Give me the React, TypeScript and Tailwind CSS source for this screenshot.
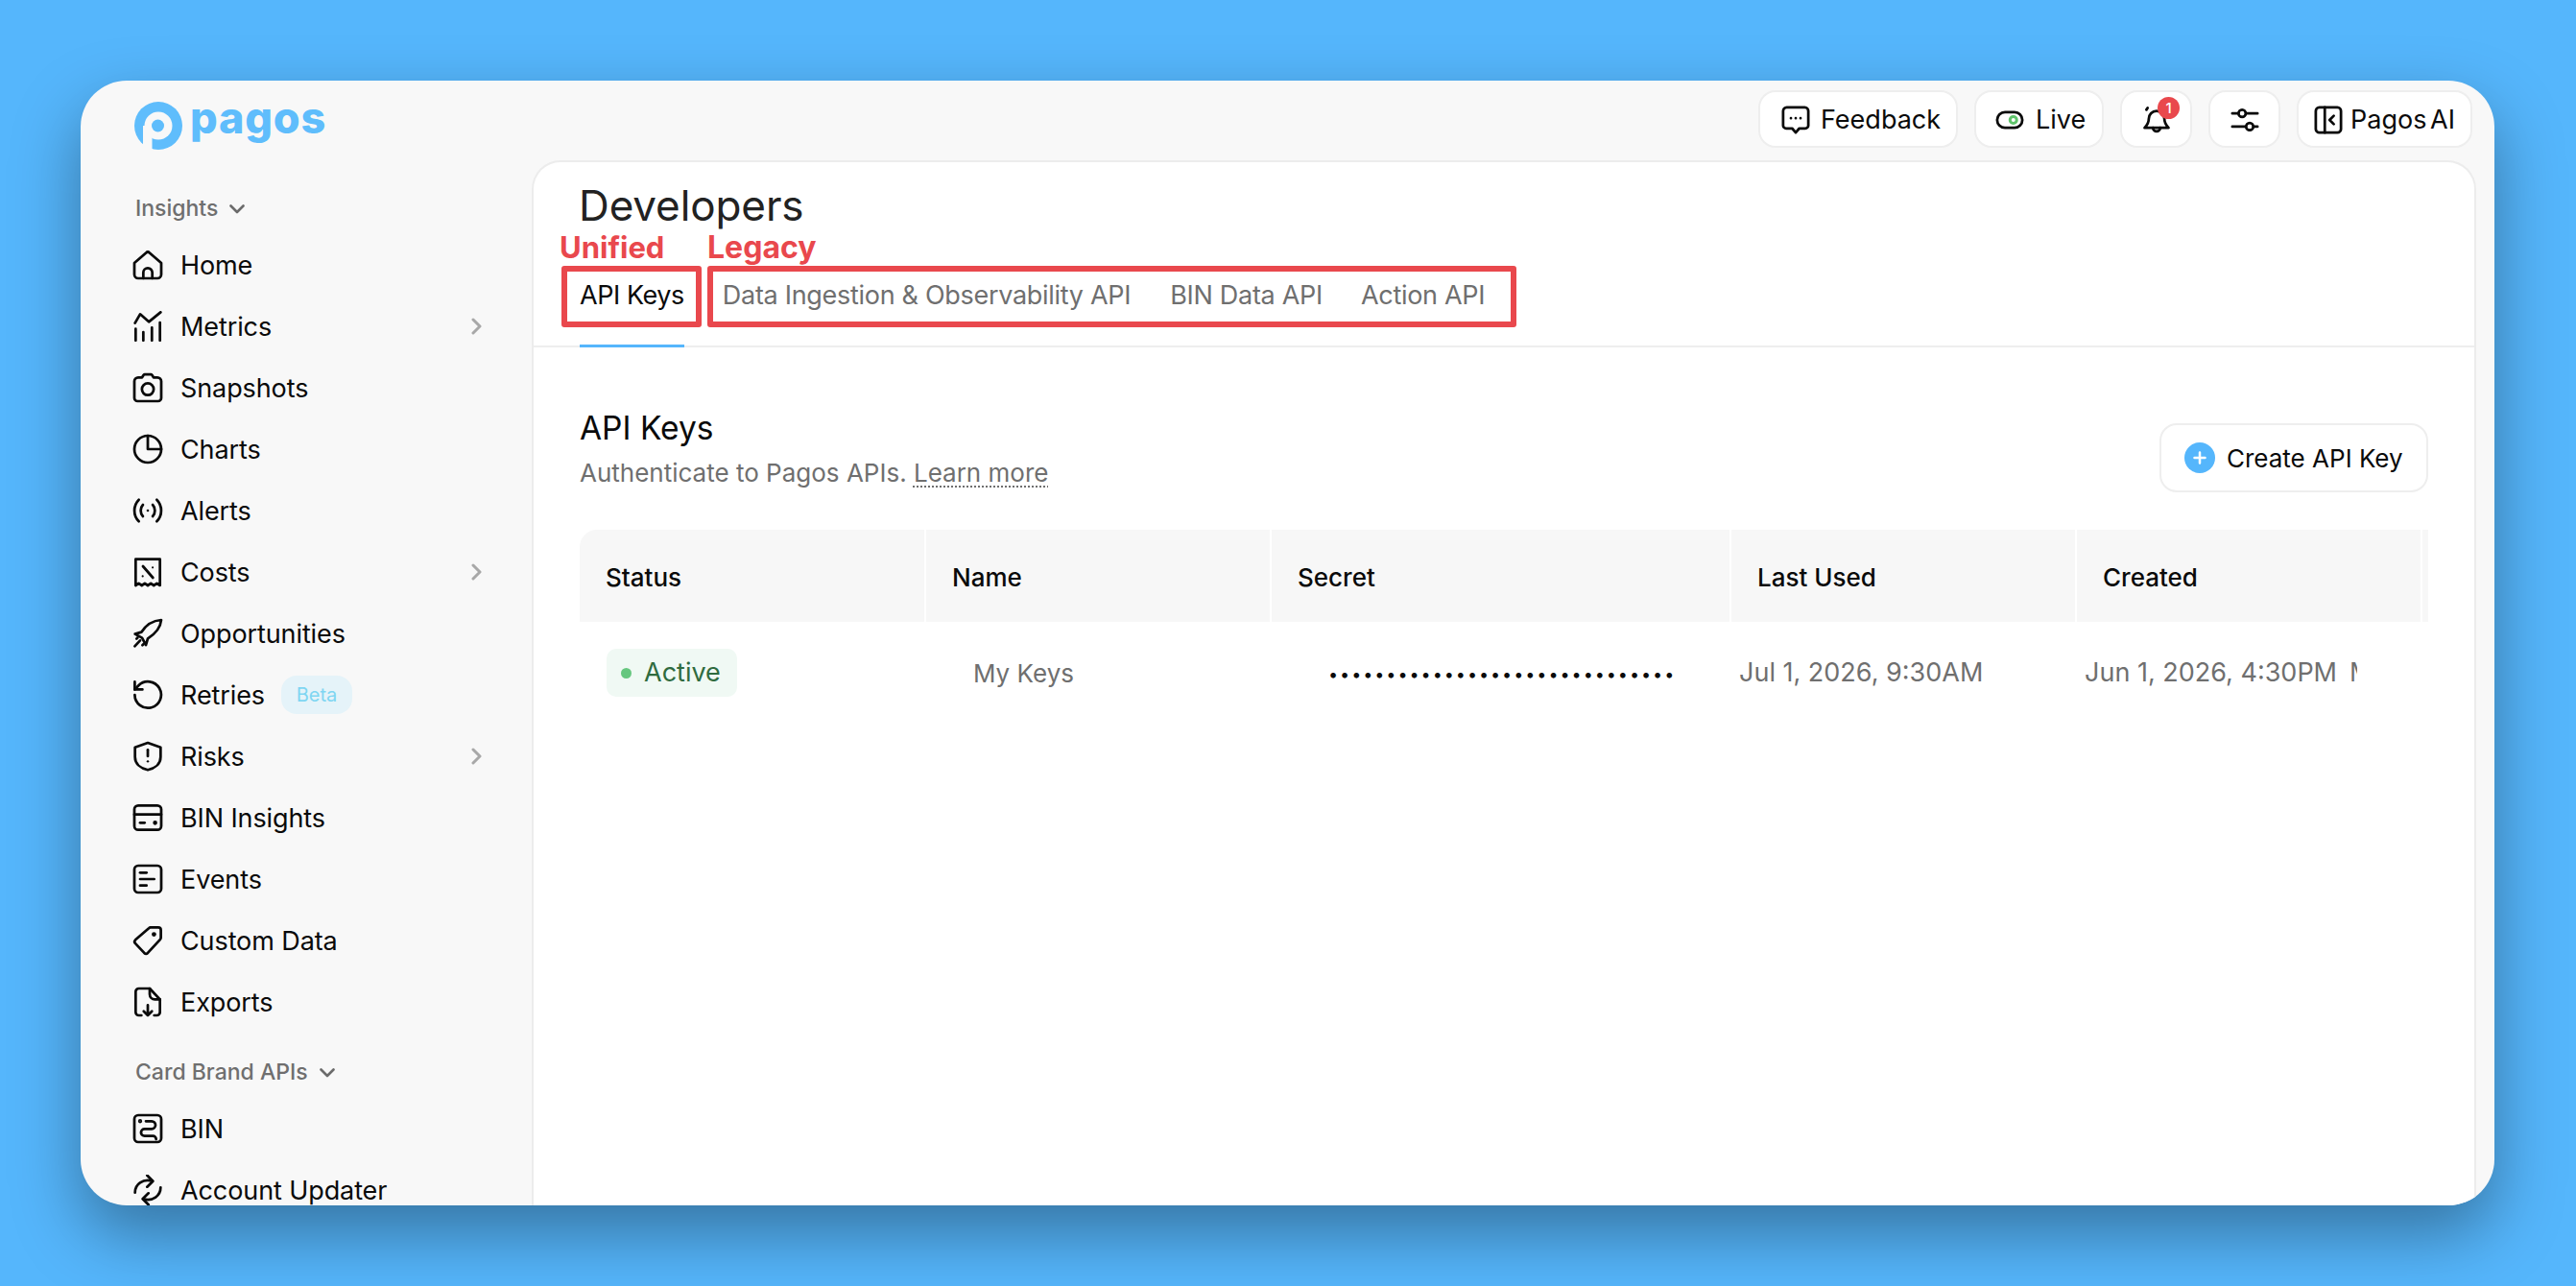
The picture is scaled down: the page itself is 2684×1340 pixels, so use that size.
import React from "react";

const S = ({ size = 32, children, sw = 2.05 }: { size?: number; children: React.ReactNode; sw?: number }) => (
  <svg width={size} height={size} viewBox="0 0 24 24" fill="none" stroke="currentColor" strokeWidth={sw} strokeLinecap="round" strokeLinejoin="round" className="shrink-0">
    {children}
  </svg>
);

const icons: Record<string, React.ReactNode> = {
  home: <><path d="M1.5 10.5 10.6 2.6a2 2 0 0 1 2.8 0l9.1 7.9V19.5a3 3 0 0 1-3 3h-15a3 3 0 0 1-3-3z" /><path d="M8.5 22.5V18a3.5 3.5 0 0 1 7 0v4.5" /></>,
  metrics: <><path d="M2.5 23v-9M8.5 23v-6.5M15.2 23v-10M21.5 23V9" /><path d="M2 9.5 6 2.5l6.8 6L22 1" /></>,
  camera: <><path d="M7.5 4 8.6 2.2A1 1 0 0 1 9.5 1.6h5a1 1 0 0 1 .9.6L16.5 4h3a3 3 0 0 1 3 3v13a2.5 2.5 0 0 1-2.5 2.5H4A2.5 2.5 0 0 1 1.5 20V7a3 3 0 0 1 3-3z" /><circle cx="12" cy="13.2" r="4.6" /></>,
  chart: <><circle cx="12" cy="12" r="10.5" /><path d="M12 1.5V12h10.5" /></>,
  alert: <><path d="M5 20.5c-4.6-4.6-4.6-12.4 0-17" /><path d="M8.2 16.5c-2.3-2.4-2.3-6.6 0-9" /><circle cx="12" cy="12" r="1" fill="currentColor" stroke="none" /><path d="M15.8 7.5c2.3 2.4 2.3 6.6 0 9" /><path d="M19 3.5c4.6 4.6 4.6 12.4 0 17" /></>,
  cost: <><path d="M2.5 2h19v20.5l-2.4-1.6-2.4 1.6-2.35-1.6-2.35 1.6-2.35-1.6-2.35 1.6-2.4-1.6-2.4 1.6z" /><path d="M8.2 7.5l7.8 9" /><circle cx="15.8" cy="8.5" r=".8" fill="currentColor" stroke="none" /><circle cx="8" cy="15.3" r=".8" fill="currentColor" stroke="none" /></>,
  rocket: <><path d="M22.5 1.5C15.5 2 10.5 5.5 7 11l-5 1.5 5.5 3 3 5.5 1.5-5c5.5-3.5 10-9 10.5-14.5z" /><path d="M6 17.5 1.8 22M3.2 16.2l.8-.8M7.8 21.2l.8-.8" /></>,
  retry: <><path d="M1.8 12a10.3 10.3 0 1 0 3-7.3L1.8 7.8" /><path d="M1.8 1.8v6h6" /></>,
  risk: <><path d="M12 1.5 22 5v7.5c0 5.5-4.5 9-10 10.2C6.5 21.5 2 18 2 12.5V5z" /><path d="M12 7v5" /><circle cx="12" cy="16" r=".9" fill="currentColor" stroke="none" /></>,
  card: <><rect x="1.5" y="2.5" width="21" height="19" rx="3" /><path d="M1.5 9.5h21" /><path d="M6 16h3.5" /><circle cx="17.7" cy="16" r=".7" fill="currentColor" /></>,
  events: <><rect x="1.5" y="1.5" width="21" height="21" rx="3" /><path d="M6 7h5" /><path d="M6 12h11" /><path d="M6 17h5" /></>,
  tag: <><path d="M14 1.8h6.2a2 2 0 0 1 2 2V10a1.5 1.5 0 0 1-.5 1.1L12 21.7a2 2 0 0 1-2.8 0L2.3 14.3a2 2 0 0 1 0-2.8L13 2.2a1.5 1.5 0 0 1 1-.4z" /><circle cx="16.8" cy="7.2" r="1.8" fill="currentColor" stroke="none" /></>,
  export: <><path d="M7 22.5H5A2.5 2.5 0 0 1 2.5 20V4A2.5 2.5 0 0 1 5 1.5h8.5l8 8.5v10a2.5 2.5 0 0 1-2.5 2.5h-2" /><path d="M13.5 1.5V6a4 4 0 0 0 4 4h4" /><path d="M12 14.5v8M8.8 19.3 12 22.5l3.2-3.2" /></>,
  bin: <><rect x="1.5" y="1.5" width="21" height="21" rx="3" /><path d="M10.5 6.2H15a3 3 0 0 1 0 6H9.5a2.8 2.8 0 0 0 0 5.6H16a2.5 2.5 0 0 1 2.5 2.5" /><circle cx="6" cy="6.2" r=".6" fill="currentColor" /></>,
  updater: <><path d="M2 14C2 7.5 8 3 15.5 5" /><path d="M11.5.5 16 5l-4.5 4.5" /><path d="M22 10c0 6.5-6 11-13.5 9" /><path d="M12.5 14.5 8 19l4.5 4.5" /></>,
};

const Chevron = () => (
  <svg width="12" height="18" viewBox="0 0 12 18" fill="none" stroke="#a8a8a8" strokeWidth="3" strokeLinecap="round" strokeLinejoin="round" className="shrink-0">
    <path d="M2 2l7 7-7 7" />
  </svg>
);

const ChevDown = () => (
  <svg width="16" height="10" viewBox="0 0 16 10" fill="none" stroke="#6b6b6b" strokeWidth="2.6" strokeLinecap="round" strokeLinejoin="round" className="shrink-0">
    <path d="M1.5 1.5 8 8l6.5-6.5" />
  </svg>
);

const NavRow = ({ icon, label, chevron, badge }: { icon: string; label: string; chevron?: boolean; badge?: boolean }) => (
  <div className="flex h-16 items-center text-[#0a0a0a]">
    <S>{icons[icon]}</S>
    <span className="ml-[18px] whitespace-nowrap text-[27px] leading-none tracking-[-0.1px]">{label}</span>
    {badge && (
      <span className="ml-[17px] flex h-10 w-[74px] items-center justify-center rounded-[16px] bg-[#e5f3f9] text-[20px] text-[#7fd6f2]">Beta</span>
    )}
    {chevron && (
      <span className="ml-auto mr-[51px] flex">
        <Chevron />
      </span>
    )}
  </div>
);

const SectionLabel = ({ label, className }: { label: string; className: string }) => (
  <div className={`flex items-center gap-[12px] pl-[3px] text-[23px] font-medium leading-none text-[#6f6f6f] ${className}`}>
    <span>{label}</span>
    <ChevDown />
  </div>
);

const TopButton = ({ children, className }: { children: React.ReactNode; className: string }) => (
  <div className={`relative flex h-[60px] items-center rounded-[18px] border-2 border-[#eeeeee] bg-white pt-[2px] text-[27px] text-[#0a0a0a] ${className}`}>
    {children}
  </div>
);

const th = "flex items-center bg-[#f7f7f7] pl-[27px] pt-[2px] text-[26px] font-medium text-[#0a0a0a]";

export default function App() {
  return (
    <div className="h-[1340px] w-[2684px] overflow-hidden bg-[#55b6fc] pb-[84px] pl-[84px] pr-[85px] pt-[84px] font-[family-name:Inter,sans-serif]">
      <div className="flex h-full overflow-hidden rounded-[48px] bg-[#f8f8f8] shadow-[0_30px_70px_rgba(0,0,0,0.36)]">
        <aside className="w-[470px] shrink-0 overflow-hidden pl-[54px]">
          <div className="flex items-start pt-[22px]">
            <svg width="50" height="50" viewBox="0 0 50 50" className="ml-[2px] shrink-0">
              <circle cx="25" cy="25" r="25" fill="#5fbdfc" />
              <circle cx="25" cy="25" r="14.5" fill="#f8f8f8" />
              <rect x="9" y="25" width="9.5" height="25" fill="#f8f8f8" />
              <circle cx="24.5" cy="25" r="6.5" fill="#5fbdfc" />
            </svg>
            <span className="ml-[8px] mt-[-13px] text-[45px] font-extrabold leading-[60px] tracking-[0.8px] text-[#5fbdfc]">pagos</span>
          </div>
          <SectionLabel label="Insights" className="mt-[50px] mb-[15px]" />
          <NavRow icon="home" label="Home" />
          <NavRow icon="metrics" label="Metrics" chevron />
          <NavRow icon="camera" label="Snapshots" />
          <NavRow icon="chart" label="Charts" />
          <NavRow icon="alert" label="Alerts" />
          <NavRow icon="cost" label="Costs" chevron />
          <NavRow icon="rocket" label="Opportunities" />
          <NavRow icon="retry" label="Retries" badge />
          <NavRow icon="risk" label="Risks" chevron />
          <NavRow icon="card" label="BIN Insights" />
          <NavRow icon="events" label="Events" />
          <NavRow icon="tag" label="Custom Data" />
          <NavRow icon="export" label="Exports" />
          <SectionLabel label="Card Brand APIs" className="mt-[30px] mb-[15px]" />
          <NavRow icon="bin" label="BIN" />
          <NavRow icon="updater" label="Account Updater" />
        </aside>

        <div className="flex min-w-0 flex-1 flex-col">
          <div className="flex h-[83px] shrink-0 items-start justify-end gap-[17px] pr-[23px] pt-[10px]">
            <TopButton className="w-[208px] pl-[22px]">
              <S size={30} sw={2.2}>
                <path d="M4.5 1.5h15a3 3 0 0 1 3 3v12a2.5 2.5 0 0 1-2.5 2.5h-5l-3 3.5L9 19H4a2.5 2.5 0 0 1-2.5-2.5v-12a3 3 0 0 1 3-3z" />
                <path d="M8 10.5h.01M12 10.5h.01M16 10.5h.01" />
              </S>
              <span className="ml-[11px]">Feedback</span>
            </TopButton>
            <TopButton className="w-[135px] pl-[20px]">
              <S size={30} sw={2.2}>
                <rect x="1.5" y="5.5" width="21" height="13" rx="6.5" />
                <circle cx="15" cy="12" r="2.8" stroke="#5fc46b" strokeWidth="2.4" />
              </S>
              <span className="ml-[12px]">Live</span>
            </TopButton>
            <TopButton className="w-[75px] justify-center">
              <S size={30} sw={2.2}>
                <path d="M12 4.5a6.5 6.5 0 0 1 6.5 6.5c0 4 1.5 5.5 3.5 7.5H2c2-2 3.5-3.5 3.5-7.5A6.5 6.5 0 0 1 12 4.5z" />
                <path d="M9 18.5a3 3 0 0 0 6 0" />
                <path d="M4.5 2 3.5 3.5" />
              </S>
              <span className="absolute left-[37px] top-[5px] flex h-[23px] w-[23px] items-center justify-center rounded-full bg-[#e9484d] text-[15px] font-medium leading-none text-white">1</span>
            </TopButton>
            <TopButton className="w-[75px] justify-center">
              <S size={30} sw={2.2}>
                <path d="M1.5 6.5h5M13 6.5h9.5" />
                <circle cx="9.7" cy="6.5" r="3" />
                <path d="M1.5 17.5h11M19.2 17.5h3.3" />
                <circle cx="16" cy="17.5" r="3" />
              </S>
            </TopButton>
            <TopButton className="w-[183px] pl-[16px]">
              <S size={30} sw={2.2}>
                <rect x="1.5" y="1.5" width="21" height="21" rx="3" />
                <path d="M9 1.5v21" />
                <path d="M16.5 8.5 13 12l3.5 3.5" />
              </S>
              <span className="ml-[8px] [word-spacing:-4px]">Pagos AI</span>
            </TopButton>
          </div>

          <main className="relative mr-[19px] min-h-0 flex-1 rounded-t-[30px] border-x-2 border-t-2 border-[#ececec] bg-white">
            <div className="border-b-2 border-[#eeeeee]">
              <h1 className="pl-[47px] pt-[15px] text-[44px] font-normal leading-[60px] tracking-[-0.1px] text-[#222222]">Developers</h1>
              <div className="mt-[50px] flex gap-[41px] pl-[48px] text-[27px] leading-none tracking-[-0.3px] text-[#6f6f6f]">
                <div className="relative pb-[39px] tracking-[-0.45px] text-[#0a0a0a]">
                  API Keys
                  <div className="absolute -bottom-[2px] left-0 right-0 h-[3px] bg-[#55b6fc]" />
                </div>
                <div className="-ml-[1px]">Data Ingestion &amp; Observability API</div>
                <div>BIN Data API</div>
                <div className="-ml-[1px]">Action API</div>
              </div>
            </div>

            <div className="pl-[48px] pr-[48px]">
              <div className="mt-[62px] flex items-end justify-between">
                <div className="pb-[2px]">
                  <div className="mb-[1px] text-[33.5px] font-normal leading-[44px] text-[#0a0a0a]">API Keys</div>
                  <div className="mt-[7px] text-[26px] leading-[36px] text-[#6f6f6f]">
                    Authenticate to Pagos APIs.{" "}
                    <span className="underline decoration-dotted decoration-2 underline-offset-4">Learn more</span>
                  </div>
                </div>
                <div className="flex h-[72px] w-[280px] items-center rounded-[18px] border-2 border-[#eeeeee] bg-white pl-[24px] text-[26px] text-[#0a0a0a]">
                  <svg width="32" height="32" viewBox="0 0 32 32" className="shrink-0">
                    <circle cx="16" cy="16" r="16" fill="#55b6fc" />
                    <path d="M16 10.5v11M10.5 16h11" stroke="white" strokeWidth="2.5" strokeLinecap="round" />
                  </svg>
                  <span className="ml-[12px] whitespace-nowrap">Create API Key</span>
                </div>
              </div>

              <div className="mt-[39px] flex h-[96px] gap-[2px]">
                <div className={`${th} w-[359px] rounded-tl-[18px]`}>Status</div>
                <div className={`${th} w-[358px]`}>Name</div>
                <div className={`${th} w-[477px]`}>Secret</div>
                <div className={`${th} w-[358px]`}>Last Used</div>
                <div className={`${th} w-[358px]`}>Created</div>
                <div className="flex-1 bg-[#f7f7f7]" />
              </div>

              <div className="mt-[28px] flex h-[50px] items-center text-[26px] text-[#6f6f6f]">
                <div className="w-[361px] pl-[28px]">
                  <span className="inline-flex h-[50px] w-[136px] items-center rounded-[10px] bg-[#f0f9f4] pl-[15px] text-[27px] text-[#2f6b3f]">
                    <span className="h-[11px] w-[11px] rounded-full bg-[#66c77f]" />
                    <span className="ml-[13px]">Active</span>
                  </span>
                </div>
                <div className="w-[360px] pl-[49px]">My Keys</div>
                <div className="w-[479px] overflow-hidden whitespace-nowrap pl-[59px] pt-[2px] text-[18px] tracking-[1.95px] text-[#0a0a0a]">
                  ••••••••••••••••••••••••••••••
                </div>
                <div className="w-[360px] whitespace-nowrap pl-[8px] text-[27px]">Jul 1, 2026, 9:30AM</div>
                <div className="w-[292px] overflow-hidden whitespace-nowrap pl-[8px] text-[27px]">
                  Jun 1, 2026, 4:30PM<span className="ml-[13px]">May</span>
                </div>
              </div>
            </div>

            <div className="absolute left-[27px] top-[71px] text-[31px] font-bold leading-[36px] text-[#e9484d]">Unified</div>
            <div className="absolute left-[181px] top-[71px] text-[32px] font-bold leading-[36px] text-[#e9484d]">Legacy</div>
            <div className="absolute left-[29px] top-[108px] h-[64px] w-[146px] rounded-[3px] border-[6px] border-[#e9484d]" />
            <div className="absolute left-[181px] top-[108px] h-[64px] w-[843px] rounded-[3px] border-[6px] border-[#e9484d]" />
          </main>
        </div>
      </div>
    </div>
  );
}
